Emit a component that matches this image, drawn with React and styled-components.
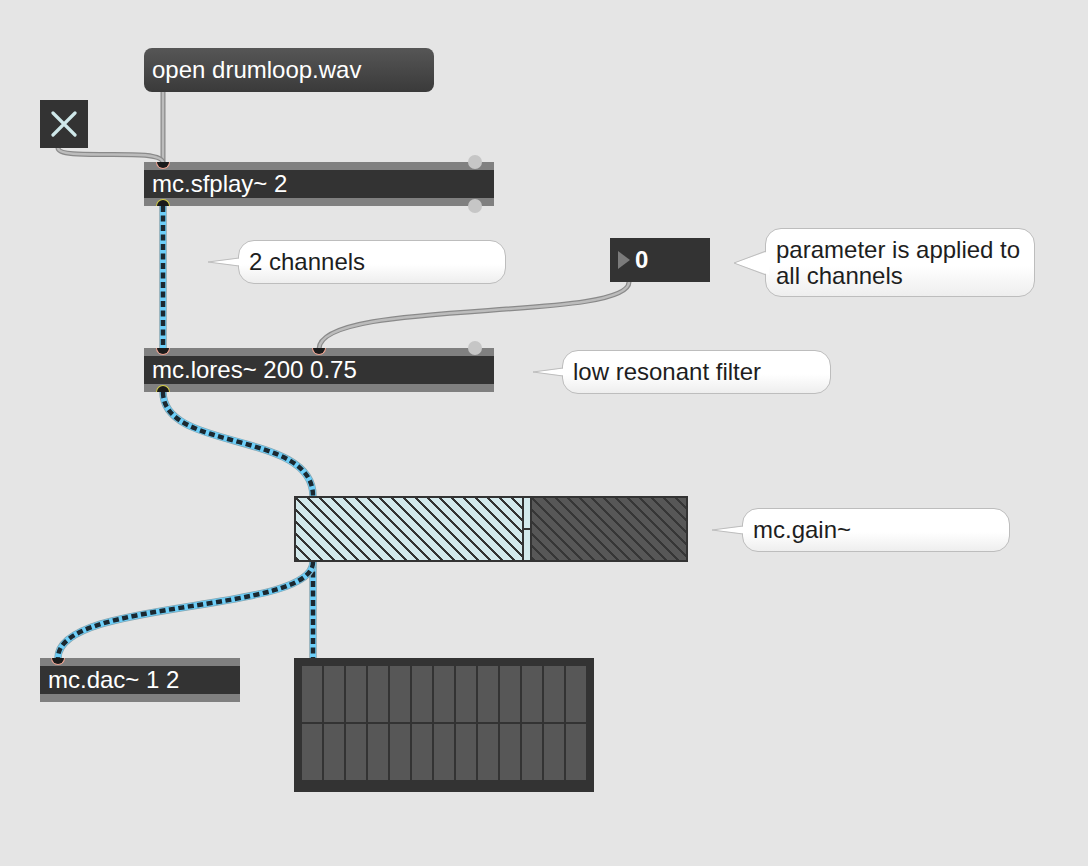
import React from 'react'
import styled, { createGlobalStyle } from 'styled-components'

const GlobalStyle = createGlobalStyle`
  body {
    margin: 0;
    background: #e5e5e5;
    font-family: "Liberation Sans", Arial, sans-serif;
  }
`

const Patcher = styled.div`
  position: relative;
  width: 1088px;
  height: 866px;
  overflow: hidden;
  background: #e5e5e5;
`

const Cables = styled.svg`
  position: absolute;
  left: 0;
  top: 0;
`

// object box: gray port bars top and bottom, dark label between
const ObjectBox = styled.div`
  position: absolute;
  left: ${(p) => p.$x}px;
  top: ${(p) => p.$y}px;
  width: ${(p) => p.$w}px;
  height: 44px;
  display: flex;
  flex-direction: column;
`

const PortBar = styled.div`
  height: 8px;
  background: #808080;
`

const Label = styled.div`
  flex: 1;
  background: #333;
  color: #fff;
  font-size: 24px;
  line-height: 28px;
  padding: 0 8px;
  white-space: nowrap;
`

// connected ports, half circles sitting on the box edge
const Port = styled.div`
  position: absolute;
  left: ${(p) => p.$at - 7}px;
  ${(p) => (p.$edge === 'top' ? 'top: 0;' : 'bottom: 0;')}
  width: 14px;
  height: 7px;
  box-sizing: border-box;
  background: #1a1a1a;
  border: 1.5px solid ${(p) => (p.$edge === 'top' ? '#f2a593' : '#d9d247')};
  ${(p) =>
    p.$edge === 'top'
      ? 'border-top: none; border-radius: 0 0 7px 7px;'
      : 'border-bottom: none; border-radius: 7px 7px 0 0;'}
`

const FreePort = styled.div`
  position: absolute;
  right: 12px;
  ${(p) => (p.$edge === 'top' ? 'top: -7px;' : 'bottom: -7px;')}
  width: 14px;
  height: 14px;
  border-radius: 50%;
  background: #c6c6c6;
`

const MessageBox = styled.div`
  position: absolute;
  left: 144px;
  top: 48px;
  width: 290px;
  height: 44px;
  box-sizing: border-box;
  border-radius: 8px;
  background: linear-gradient(to bottom, #565656, #3a3a3a);
  color: #fff;
  font-size: 24px;
  line-height: 44px;
  padding-left: 8px;
  white-space: nowrap;
`

const Toggle = styled.div`
  position: absolute;
  left: 40px;
  top: 100px;
  width: 48px;
  height: 48px;
  background: #333;
  display: flex;
  align-items: center;
  justify-content: center;
`

const NumberBox = styled.div`
  position: absolute;
  left: 610px;
  top: 238px;
  width: 100px;
  height: 44px;
  background: #333;
  display: flex;
  align-items: center;
  gap: 5px;
  padding-left: 8px;
  box-sizing: border-box;
  color: #fff;
  font-size: 24px;
  font-weight: bold;
`

const Arrow = styled.div`
  width: 0;
  height: 0;
  border-top: 9px solid transparent;
  border-bottom: 9px solid transparent;
  border-left: 12px solid #7b7b7b;
`

const Bubble = styled.div`
  position: absolute;
  left: ${(p) => p.$x}px;
  top: ${(p) => p.$y}px;
  width: ${(p) => p.$w}px;
  height: ${(p) => p.$h}px;
  box-sizing: border-box;
  border: 1px solid #bdbdbd;
  border-radius: 16px;
  background: linear-gradient(to bottom, #ffffff 55%, #eeeeee);
  color: #1e1e1e;
  font-size: 24px;
  line-height: ${(p) => (p.$multi ? '26px' : '42px')};
  padding: ${(p) => (p.$multi ? '8px 10px 0' : '0 10px')};
`

const Tail = styled.svg`
  position: absolute;
  left: ${(p) => -p.$len - 1}px;
  top: ${(p) => p.$mid - p.$half - 2}px;
`

const Gain = styled.div`
  position: absolute;
  left: 294px;
  top: 496px;
  width: 394px;
  height: 66px;
  box-sizing: border-box;
  border: 2px solid #333;
  display: flex;
`

const GainFill = styled.div`
  width: 226px;
  background: repeating-linear-gradient(
    45deg,
    #333 0 2.2px,
    #d3e9ec 2.2px 8.5px
  );
`

const GainKnob = styled.div`
  width: 6px;
  border-left: 2px solid #333;
  border-right: 2px solid #333;
  background: linear-gradient(
    to bottom,
    #d3e9ec 0 30px,
    #333 30px 32px,
    #d3e9ec 32px
  );
`

const GainRest = styled.div`
  flex: 1;
  background: repeating-linear-gradient(
    45deg,
    #363636 0 2.2px,
    #575757 2.2px 8.5px
  );
`

const Meter = styled.div`
  position: absolute;
  left: 294px;
  top: 658px;
  width: 300px;
  height: 134px;
  box-sizing: border-box;
  background: #333;
  padding: 8px 8px 12px;
  display: grid;
  grid-template-columns: repeat(13, 20px);
  grid-template-rows: 56px 56px;
  gap: 2px;
`

const MeterCell = styled.div`
  background: #575757;
`

const Comment = ({ x, y, w, h, len, mid, half, multi, children }) => (
  <Bubble $x={x} $y={y} $w={w} $h={h} $multi={multi}>
    <Tail $len={len} $mid={mid} $half={half} width={len + 4} height={half * 2 + 4}>
      <polygon
        points={`0,${half + 2} ${len + 4},${2} ${len + 4},${half * 2 + 2}`}
        fill="#fff"
      />
      <polyline
        points={`${len + 1},2 0,${half + 2} ${len + 1},${half * 2 + 2}`}
        fill="none"
        stroke="#bdbdbd"
        strokeWidth="1"
      />
    </Tail>
    {children}
  </Bubble>
)

const GrayCable = ({ d }) => (
  <g fill="none" strokeLinecap="round">
    <path d={d} stroke="#8a8a8a" strokeWidth="5" />
    <path d={d} stroke="#bcbcbc" strokeWidth="2.5" />
  </g>
)

const McCable = ({ d }) => (
  <g fill="none">
    <path d={d} stroke="#86a6b2" strokeWidth="7.5" />
    <path d={d} stroke="#6dcef8" strokeWidth="6" />
    <path d={d} stroke="#1b2830" strokeWidth="4.5" strokeDasharray="6 3.5" />
  </g>
)

const App = () => {
  const cells = Array.from({ length: 26 })

  return (
    <>
      <GlobalStyle />
      <Patcher>
        <Cables width="1088" height="866">
          <GrayCable d="M163 92 L163 163" />
          <GrayCable d="M58 148 C58 162 163 146 163 163" />
          <GrayCable d="M629 282 C629 322 319 298 319 349" />
          <McCable d="M163 206 L163 348" />
          <McCable d="M163 392 C163 452 313 430 313 496" />
          <McCable d="M313 562 L313 658" />
          <McCable d="M313 562 C313 614 58 598 58 658" />
        </Cables>

        <MessageBox>open drumloop.wav</MessageBox>

        <Toggle>
          <svg width="26" height="26" viewBox="0 0 26 26">
            <path
              d="M2 2 L24 24 M24 2 L2 24"
              stroke="#cfe8ea"
              strokeWidth="3.2"
              strokeLinecap="round"
            />
          </svg>
        </Toggle>

        <ObjectBox $x={144} $y={162} $w={350}>
          <PortBar />
          <Label>mc.sfplay~ 2</Label>
          <PortBar />
          <Port $edge="top" $at={19} />
          <Port $edge="bottom" $at={19} />
          <FreePort $edge="top" />
          <FreePort $edge="bottom" />
        </ObjectBox>

        <Comment x={238} y={240} w={268} h={44} len={30} mid={21} half={4}>
          2 channels
        </Comment>

        <NumberBox>
          <Arrow />
          0
        </NumberBox>

        <Comment x={765} y={228} w={270} h={69} len={31} mid={34} half={12} multi>
          parameter is applied to
          <br />
          all channels
        </Comment>

        <ObjectBox $x={144} $y={348} $w={350}>
          <PortBar />
          <Label>mc.lores~ 200 0.75</Label>
          <PortBar />
          <Port $edge="top" $at={19} />
          <Port $edge="top" $at={175} />
          <Port $edge="bottom" $at={19} />
          <FreePort $edge="top" />
        </ObjectBox>

        <Comment x={562} y={350} w={269} h={44} len={29} mid={21} half={4}>
          low resonant filter
        </Comment>

        <Gain>
          <GainFill />
          <GainKnob />
          <GainRest />
        </Gain>

        <Comment x={742} y={508} w={268} h={44} len={30} mid={21} half={4}>
          mc.gain~
        </Comment>

        <ObjectBox $x={40} $y={658} $w={200}>
          <PortBar />
          <Label>mc.dac~ 1 2</Label>
          <PortBar />
          <Port $edge="top" $at={18} />
        </ObjectBox>

        <Meter>
          {cells.map((_, i) => (
            <MeterCell key={i} />
          ))}
        </Meter>
      </Patcher>
    </>
  )
}

export default App
